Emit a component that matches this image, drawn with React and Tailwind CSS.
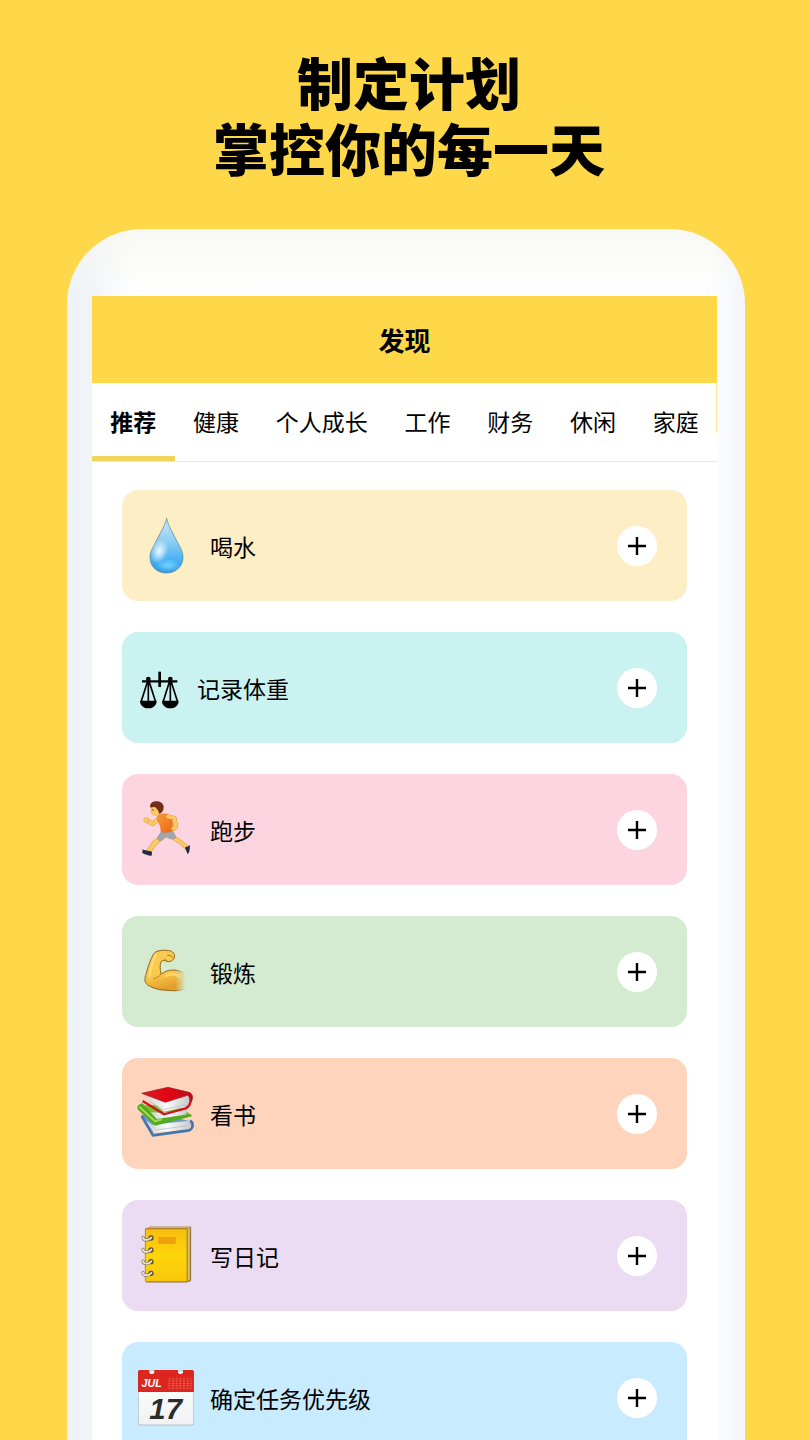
import { useState } from 'react';
import clsx from 'clsx';

const tabs = ['推荐', '健康', '个人成长', '工作', '财务', '休闲', '家庭'];

function DropIcon() {
  return (
    <svg width="56" height="56" viewBox="84 102 168 168" aria-hidden="true">
      <defs>
        <linearGradient id="drop-body" x1="0" y1="0" x2="0" y2="1">
          <stop offset="0" stopColor="#cfe6ee" />
          <stop offset="0.4" stopColor="#8fd0f3" />
          <stop offset="0.75" stopColor="#4bb0f3" />
          <stop offset="1" stopColor="#2f9ae6" />
        </linearGradient>
        <radialGradient id="drop-shine">
          <stop offset="0" stopColor="#fff" stopOpacity="0.9" />
          <stop offset="1" stopColor="#fff" stopOpacity="0" />
        </radialGradient>
        <radialGradient id="drop-glow">
          <stop offset="0" stopColor="#7fe0ff" stopOpacity="0.8" />
          <stop offset="1" stopColor="#7fe0ff" stopOpacity="0" />
        </radialGradient>
      </defs>
      <path
        d="M170 103C174 124 189 148 203 176C213 195 219 204 219 220C219 248 197 267 169 267C141 267 120 248 120 220C120 204 126 195 136 176C150 148 165 124 170 103Z"
        fill="url(#drop-body)"
        stroke="#4c7f9c"
        strokeWidth="2"
      />
      <ellipse cx="148" cy="202" rx="26" ry="38" fill="url(#drop-shine)" transform="rotate(18 148 202)" />
      <ellipse cx="174" cy="244" rx="38" ry="20" fill="url(#drop-glow)" />
    </svg>
  );
}

function ScaleIcon() {
  return (
    <svg width="43" height="56" viewBox="84 101 129 168" aria-hidden="true">
      <g fill="none" stroke="#000">
        <path d="M149 136v46" strokeWidth="8" />
        <path d="M96 165h106" strokeWidth="7" />
        <path d="M115 158L94 224M115 158V226M115 158L136 224" strokeWidth="5" />
        <path d="M181 158L160 224M181 158V226M181 158L202 224" strokeWidth="5" />
      </g>
      <circle cx="115" cy="158" r="7" />
      <circle cx="181" cy="158" r="7" />
      <path d="M90 223h50c0 14-11 23-25 23s-25-9-25-23Z" />
      <path d="M156 223h50c0 14-11 23-25 23s-25-9-25-23Z" />
    </svg>
  );
}

function RunnerIcon() {
  return (
    <svg width="56" height="56" viewBox="84 103 168 168" overflow="visible" aria-hidden="true">
      <defs>
        <linearGradient id="runner-shirt" x1="0" y1="0" x2="1" y2="1">
          <stop offset="0" stopColor="#f99a38" />
          <stop offset="1" stopColor="#ee6713" />
        </linearGradient>
      </defs>
      <g strokeLinecap="round" strokeLinejoin="round" fill="none">
        <path d="M150 150L128 169L110 158" stroke="#c98a27" strokeWidth="13" />
        <path d="M150 150L128 169L110 158" stroke="#fbcb62" strokeWidth="11" />
        <path d="M186 207L205 219L229 238" stroke="#c98a27" strokeWidth="13" />
        <path d="M186 207L205 219L229 238" stroke="#fbcb62" strokeWidth="11" />
        <path d="M150 213L134 226L117 250" stroke="#c98a27" strokeWidth="15" />
        <path d="M150 213L134 226L117 250" stroke="#fbcb62" strokeWidth="13" />
      </g>
      <circle cx="109" cy="157" r="8" fill="#fbcb62" stroke="#c98a27" />
      <path d="M98 245C104 250 114 247 126 253L125 264C117 265 105 260 97 256Z" fill="#1d2b45" />
      <path d="M239 231C235 239 228 235 225 240L229 250L233 259C237 258 241 244 239 231Z" fill="#1d2b45" />
      <path d="M155 190L186 188C192 195 197 203 197 211C188 217 176 213 169 208C162 213 156 219 149 220C142 216 140 212 144 206Z" fill="#a3a5a8" stroke="#85888c" />
      <path d="M143 145C152 138 164 137 173 140C184 144 187 153 187 164L189 188C177 195 163 196 153 192C153 180 149 168 142 158Z" fill="url(#runner-shirt)" stroke="#cf5d14" />
      <path d="M174 147L193 151L198 178L190 183" fill="none" stroke="#c98a27" strokeWidth="13" strokeLinecap="round" strokeLinejoin="round" />
      <path d="M174 147L193 151L198 178L190 183" fill="none" stroke="#fbcb62" strokeWidth="11" strokeLinecap="round" strokeLinejoin="round" />
      <path d="M124 118C121 127 123 138 130 142C140 146 151 141 155 132L151 115Z" fill="#fbcb62" stroke="#c98a27" />
      <path d="M121 119C118 110 126 101 138 101C151 100 161 108 161 119C161 129 156 136 149 138C145 137 147 131 143 127C139 123 138 119 134 118C129 117 125 120 121 119Z" fill="#722d1b" />
      <circle cx="129" cy="127" r="2" fill="#4a2412" />
    </svg>
  );
}

function MuscleIcon() {
  return (
    <svg width="56" height="56" viewBox="84 102 168 168" aria-hidden="true">
      <defs>
        <linearGradient id="arm" x1="0" y1="0" x2="0.3" y2="1">
          <stop offset="0" stopColor="#f6ca55" />
          <stop offset="0.6" stopColor="#fbcb4c" />
          <stop offset="1" stopColor="#e2a02a" />
        </linearGradient>
        <linearGradient id="arm-fade" gradientUnits="userSpaceOnUse" x1="196" y1="0" x2="227" y2="0">
          <stop offset="0" stopColor="#fff" />
          <stop offset="1" stopColor="#000" />
        </linearGradient>
        <mask id="arm-mask" maskUnits="userSpaceOnUse" x="84" y="102" width="168" height="168">
          <rect x="84" y="102" width="168" height="168" fill="url(#arm-fade)" />
        </mask>
      </defs>
      <g mask="url(#arm-mask)">
        <path
          d="M141 124C153 119 176 120 185 124C193 129 196 139 192 146C187 153 178 157 170 154C163 150 156 151 153 156C149 165 150 177 153 192C163 185 177 179 191 180C206 180 216 186 232 196V234C211 242 194 244 174 241C153 241 128 236 112 224C102 216 104 204 108 193C113 173 121 149 130 133C133 128 136 126 141 124Z"
          fill="url(#arm)"
          stroke="#94651a"
          strokeWidth="3"
        />
        <path d="M130 206C139 204 148 201 154 191" fill="none" stroke="#bd8424" strokeWidth="3" />
        <path d="M172 136C180 135 187 139 190 144M163 146L170 153" fill="none" stroke="#a8731f" strokeWidth="3" />
        <path d="M137 136C128 155 121 177 119 201" fill="none" stroke="#ffe896" strokeWidth="7" opacity="0.6" strokeLinecap="round" />
        <path d="M169 197C182 190 197 192 208 199" fill="none" stroke="#ffe896" strokeWidth="8" opacity="0.6" strokeLinecap="round" />
      </g>
    </svg>
  );
}

function BooksIcon() {
  return (
    <svg width="56" height="56" viewBox="84 106 168 168" overflow="visible" aria-hidden="true">
      <defs>
        <linearGradient id="red-cover" x1="0" y1="0" x2="1" y2="0">
          <stop offset="0" stopColor="#d51f27" />
          <stop offset="0.5" stopColor="#e30613" />
          <stop offset="1" stopColor="#b80e1a" />
        </linearGradient>
        <linearGradient id="paper" x1="0" y1="0" x2="1" y2="0">
          <stop offset="0" stopColor="#cfd2d5" />
          <stop offset="0.5" stopColor="#fafafa" />
          <stop offset="1" stopColor="#c5c7cb" />
        </linearGradient>
      </defs>
      <path d="M92 192L128 246L228 233L247 213L213 205Z" fill="#6a9bce" />
      <path d="M101 206L131 247L232 234C246 228 247 216 239 210L128 222Z" fill="url(#paper)" />
      <path d="M110 218L133 243M119 218L139 238L228 226" fill="none" stroke="#adb8c4" strokeWidth="2" />
      <path d="M95 196L129 254L237 239C251 233 251 216 240 210" fill="none" stroke="#4376ad" strokeWidth="8" strokeLinejoin="round" />
      <path d="M84 165L134 218L245 195L221 174L140 162Z" fill="#79bd31" />
      <path d="M120 185L142 211L226 196L234 176L162 186Z" fill="url(#paper)" />
      <path d="M84 177C80 169 84 161 97 158L140 205L241 190L246 197L135 225Z" fill="#56a91f" />
      <path d="M88 168L135 212L156 206" fill="none" stroke="#9bdc4f" strokeWidth="6" />
      <path d="M103 137L162 183L226 169C241 160 241 141 235 132L166 151Z" fill="url(#paper)" />
      <path d="M118 152L161 177L226 162" fill="none" stroke="#b7b7ba" strokeWidth="2" />
      <path d="M98 151L162 191L227 173C242 166 247 145 236 131" fill="none" stroke="#cf1422" strokeWidth="7" />
      <path d="M95 128L174 110L237 125C249 128 251 145 243 154C245 143 242 136 233 134L166 155Z" fill="url(#red-cover)" stroke="#9d1822" strokeWidth="2" />
    </svg>
  );
}

function NotebookIcon() {
  return (
    <svg width="56" height="56" viewBox="84 105 168 168" overflow="visible" aria-hidden="true">
      <defs>
        <linearGradient id="cover" x1="0" y1="0" x2="0" y2="1">
          <stop offset="0" stopColor="#f9bd10" />
          <stop offset="0.5" stopColor="#fdd50a" />
          <stop offset="1" stopColor="#f9c60d" />
        </linearGradient>
      </defs>
      <path d="M107 107L120 102H242V263L231 267H109Z" fill="#b8892a" stroke="#74581d" strokeWidth="2" />
      <path d="M233 108L239 105V261L233 265Z" fill="#d9bf73" />
      <rect x="106" y="108" width="125" height="158" rx="3" fill="url(#cover)" stroke="#a37812" strokeWidth="2" />
      <path d="M110 105L120 103H240" fill="none" stroke="#ffe55c" strokeWidth="2" />
      <rect x="145" y="132" width="52" height="21" fill="#efa00d" />
      {[135, 171, 206, 241].map((y) => (
        <g key={y}>
          <circle cx="123" cy={y} r="8" fill="#5b4a23" />
          <path d={`M99 ${y - 2}C100 ${y + 9} 117 ${y + 8} 124 ${y - 1}`} fill="none" stroke="#665c49" strokeWidth="9" strokeLinecap="round" />
          <path d={`M99 ${y - 2}C100 ${y + 9} 117 ${y + 8} 124 ${y - 1}`} fill="none" stroke="#e6e0cc" strokeWidth="6" strokeLinecap="round" />
        </g>
      ))}
    </svg>
  );
}

function CalendarIcon() {
  return (
    <svg width="56" height="56" viewBox="84 101 168 168" aria-hidden="true">
      <defs>
        <linearGradient id="page" x1="0" y1="0" x2="0" y2="1">
          <stop offset="0" stopColor="#fff" />
          <stop offset="1" stopColor="#f1f2f3" />
        </linearGradient>
        <pattern id="days" width="11" height="7" patternUnits="userSpaceOnUse" x="175" y="126">
          <rect width="6" height="3" fill="#f4726b" />
        </pattern>
      </defs>
      <rect x="85" y="104" width="166" height="162" rx="5" fill="url(#page)" stroke="#a3adb3" strokeWidth="2" />
      <path d="M84 167V106Q84 101 90 101H118V109Q125 117 133 109V101H204V109Q211 117 219 109V101H246Q252 101 252 106V167Z" fill="#db2720" />
      <rect x="175" y="126" width="70" height="32" fill="url(#days)" />
      <text x="125" y="153" textAnchor="middle" fontSize="32" fontWeight="700" fontStyle="italic" fontFamily="Liberation Sans, sans-serif" fill="#fff">JUL</text>
      <text x="167" y="247" textAnchor="middle" fontSize="88" fontWeight="700" fontStyle="italic" fontFamily="Liberation Sans, sans-serif" fill="#2c2c2c">17</text>
    </svg>
  );
}

const habits = [
  { name: '喝水', Icon: DropIcon, color: 'bg-[#fdeec5]' },
  { name: '记录体重', Icon: ScaleIcon, color: 'bg-[#caf2f0]' },
  { name: '跑步', Icon: RunnerIcon, color: 'bg-[#fcd5e1]' },
  { name: '锻炼', Icon: MuscleIcon, color: 'bg-[#d4ebd2]' },
  { name: '看书', Icon: BooksIcon, color: 'bg-[#fed4bc]' },
  { name: '写日记', Icon: NotebookIcon, color: 'bg-[#ebdcf3]' },
  { name: '确定任务优先级', Icon: CalendarIcon, color: 'bg-[#c9ebff]' },
];

function HabitCard({ name, Icon, color }) {
  return (
    <li className={clsx('flex h-[111px] shrink-0 items-center gap-4 rounded-2xl pr-[30px] pl-4', color)}>
      <Icon />
      <span className="flex-1 pt-1 text-[23px] leading-8">{name}</span>
      <button type="button" aria-label={`添加${name}`} className="flex size-10 items-center justify-center rounded-full bg-white">
        <svg width="20" height="20" viewBox="0 0 20 20" stroke="#000" strokeWidth="2.4" aria-hidden="true">
          <path d="M10 1v18M1 10h18" />
        </svg>
      </button>
    </li>
  );
}

export default function App() {
  const [active, setActive] = useState('推荐');

  return (
    <main className="flex h-screen flex-col overflow-hidden bg-[#ffd84a] font-['Inter','Noto_Sans_CJK_SC',sans-serif] text-black">
      <h1 className="pt-[52px] pb-[45px] pl-2 text-center text-[56px] leading-[66px] font-black">
        制定计划
        <br />
        掌控你的每一天
      </h1>

      <div className="mr-[65px] ml-[67px] flex min-h-0 flex-1 flex-col overflow-hidden rounded-t-[75px] bg-[linear-gradient(180deg,#f8f8f3,#f8f8f300_60px),linear-gradient(90deg,#edf2f8,#f1f4f7_24px,#fff_70px,#fff_calc(100%-40px),#f4f5fd)] pt-[67px] pr-7 pl-[25px]">
        <header className="flex h-[87px] shrink-0 items-center justify-center bg-[#ffd84a]">
          <h2 className="pt-1 text-[26px] leading-9 font-bold">发现</h2>
        </header>

        <nav className="relative flex h-[79px] shrink-0 border-b border-[#e8e8e8] bg-white">
          {tabs.map((tab) => (
            <button
              key={tab}
              type="button"
              onClick={() => setActive(tab)}
              className={clsx(
                'flex-auto border-b-5 px-[18px] pt-[6px] text-[23px] leading-8 whitespace-nowrap',
                active === tab ? 'border-[#f0d65c] font-bold' : 'border-transparent',
              )}
            >
              {tab}
            </button>
          ))}
          <span className="absolute top-0 right-0 h-[50px] w-px bg-[#fdeaa2]" />
        </nav>

        <ul className="flex min-h-0 flex-1 flex-col gap-[31px] bg-white px-[30px] pt-7">
          {habits.map((habit) => (
            <HabitCard key={habit.name} {...habit} />
          ))}
        </ul>
      </div>
    </main>
  );
}
